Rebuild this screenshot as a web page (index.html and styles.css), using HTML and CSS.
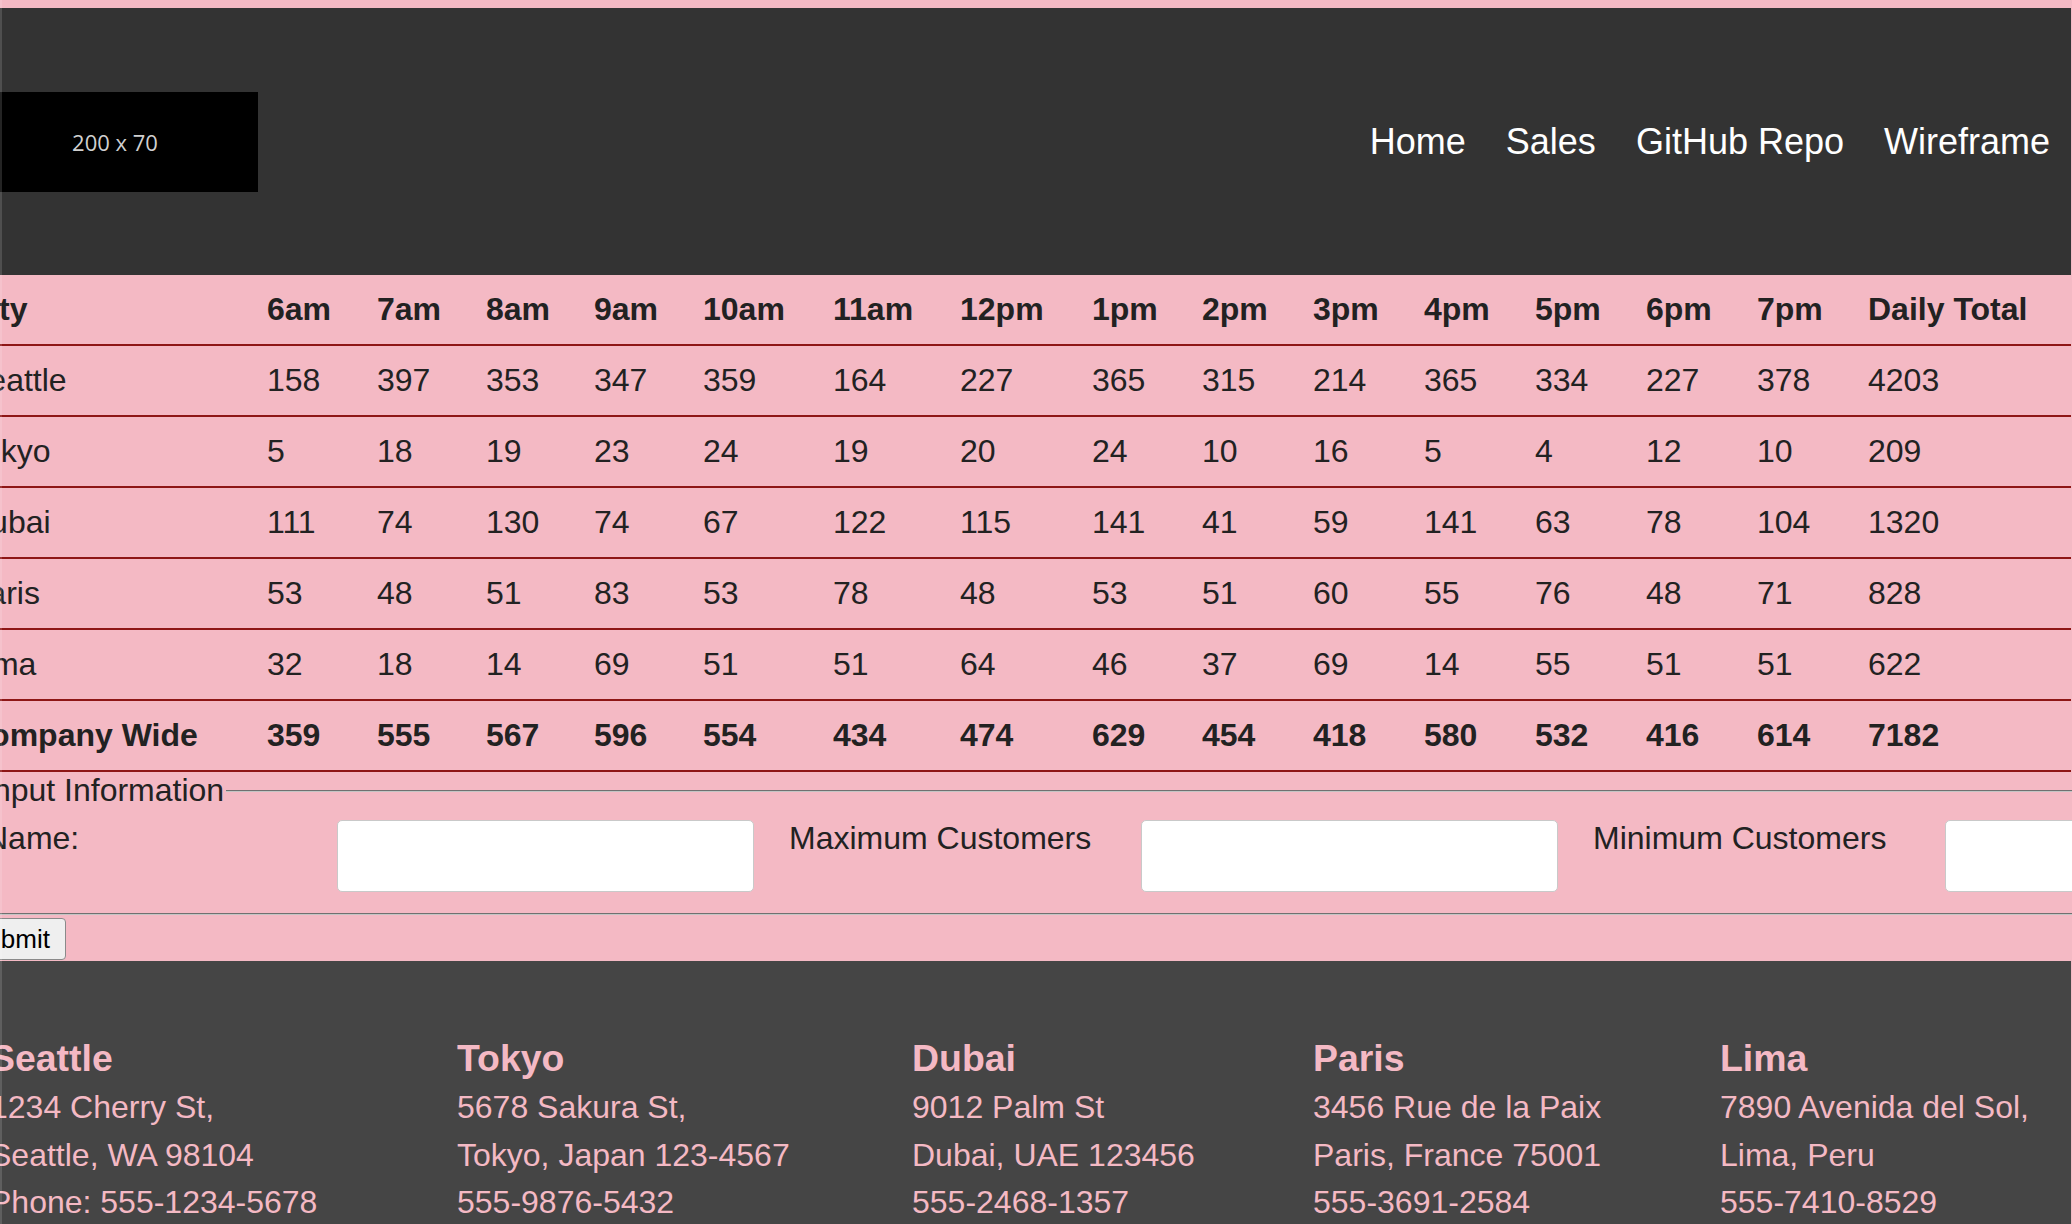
FILE: index.html
```html
<!DOCTYPE html>
<html lang="en">
<head>
<meta charset="utf-8">
<title>Salmon Cookies - Sales</title>
<link rel="stylesheet" href="styles.css">
</head>
<body>
<div class="edge"></div>
<div class="page">
  <header class="site-header">
    <div class="logo">200 x 70</div>
    <nav class="nav">
      <a class="nav-link" href="#">Home</a>
      <a class="nav-link" href="#">Sales</a>
      <a class="nav-link" href="#">GitHub Repo</a>
      <a class="nav-link" href="#">Wireframe</a>
    </nav>
  </header>
  <main>
    <table class="sales">
      <colgroup>
        <col><col><col><col><col><col><col><col><col><col><col><col><col><col><col><col>
      </colgroup>
      <thead>
        <tr><th>City</th><th>6am</th><th>7am</th><th>8am</th><th>9am</th><th>10am</th><th>11am</th><th>12pm</th><th>1pm</th><th>2pm</th><th>3pm</th><th>4pm</th><th>5pm</th><th>6pm</th><th>7pm</th><th>Daily Total</th></tr>
      </thead>
      <tbody>
        <tr><td>Seattle</td><td>158</td><td>397</td><td>353</td><td>347</td><td>359</td><td>164</td><td>227</td><td>365</td><td>315</td><td>214</td><td>365</td><td>334</td><td>227</td><td>378</td><td>4203</td></tr>
        <tr><td>Tokyo</td><td>5</td><td>18</td><td>19</td><td>23</td><td>24</td><td>19</td><td>20</td><td>24</td><td>10</td><td>16</td><td>5</td><td>4</td><td>12</td><td>10</td><td>209</td></tr>
        <tr><td>Dubai</td><td>111</td><td>74</td><td>130</td><td>74</td><td>67</td><td>122</td><td>115</td><td>141</td><td>41</td><td>59</td><td>141</td><td>63</td><td>78</td><td>104</td><td>1320</td></tr>
        <tr><td>Paris</td><td>53</td><td>48</td><td>51</td><td>83</td><td>53</td><td>78</td><td>48</td><td>53</td><td>51</td><td>60</td><td>55</td><td>76</td><td>48</td><td>71</td><td>828</td></tr>
        <tr><td>Lima</td><td>32</td><td>18</td><td>14</td><td>69</td><td>51</td><td>51</td><td>64</td><td>46</td><td>37</td><td>69</td><td>14</td><td>55</td><td>51</td><td>51</td><td>622</td></tr>
      </tbody>
      <tfoot>
        <tr><th>Company Wide</th><th>359</th><th>555</th><th>567</th><th>596</th><th>554</th><th>434</th><th>474</th><th>629</th><th>454</th><th>418</th><th>580</th><th>532</th><th>416</th><th>614</th><th>7182</th></tr>
      </tfoot>
    </table>

    <form class="store-form">
      <fieldset class="fieldset">
        <legend class="legend">Input Information</legend>
        <div class="fields">
          <label class="field-label" for="name">Name:</label>
          <input class="field-input" id="name" type="text">
          <label class="field-label" for="max">Maximum Customers</label>
          <input class="field-input" id="max" type="text">
          <label class="field-label" for="min">Minimum Customers</label>
          <input class="field-input" id="min" type="text">
          <label class="field-label" for="avg">Average Cookies</label>
          <input class="field-input" id="avg" type="text">
        </div>
      </fieldset>
      <button class="submit" type="submit">Submit</button>
    </form>
  </main>
  <footer class="site-footer">
    <div class="loc loc-seattle">
      <h3 class="loc-title">Seattle</h3>
      <p class="loc-line">1234 Cherry St,</p>
      <p class="loc-line">Seattle, WA 98104</p>
      <p class="loc-line">Phone: 555-1234-5678</p>
    </div>
    <div class="loc loc-tokyo">
      <h3 class="loc-title">Tokyo</h3>
      <p class="loc-line">5678 Sakura St,</p>
      <p class="loc-line">Tokyo, Japan 123-4567</p>
      <p class="loc-line">555-9876-5432</p>
    </div>
    <div class="loc loc-dubai">
      <h3 class="loc-title">Dubai</h3>
      <p class="loc-line">9012 Palm St</p>
      <p class="loc-line">Dubai, UAE 123456</p>
      <p class="loc-line">555-2468-1357</p>
    </div>
    <div class="loc loc-paris">
      <h3 class="loc-title">Paris</h3>
      <p class="loc-line">3456 Rue de la Paix</p>
      <p class="loc-line">Paris, France 75001</p>
      <p class="loc-line">555-3691-2584</p>
    </div>
    <div class="loc loc-lima">
      <h3 class="loc-title">Lima</h3>
      <p class="loc-line">7890 Avenida del Sol,</p>
      <p class="loc-line">Lima, Peru</p>
      <p class="loc-line">555-7410-8529</p>
    </div>
  </footer>
</div>
</body>
</html>
```

FILE: styles.css
```css
html {
  overflow: hidden;
}

body {
  margin: 8px 0 0;
  background: #f4b9c4;
  color: #222;
  font-family: "Liberation Sans", Arial, sans-serif;
}

.edge {
  position: fixed;
  left: 0;
  top: 0;
  bottom: 0;
  width: 2px;
  background: rgba(255, 255, 255, 0.14);
  z-index: 5;
}

.page {
  width: 2115px;
  margin-left: -44px;
}

/* Header */
.site-header {
  height: 267px;
  background: #333333;
  display: flex;
  align-items: center;
  justify-content: space-between;
  padding: 0 21px 0 16px;
  box-sizing: border-box;
}

.logo {
  width: 286px;
  height: 100px;
  background: #000;
  color: #d0d0d0;
  font-family: "Open Sans", "DejaVu Sans", sans-serif;
  font-size: 22px;
  display: flex;
  align-items: center;
  justify-content: center;
}

.nav {
  display: flex;
  gap: 40px;
}

.nav-link {
  color: #fff;
  text-decoration: none;
  font-size: 36px;
}

/* Table */
.sales {
  width: 2115px;
  table-layout: fixed;
  border-collapse: collapse;
  font-size: 32px;
}

.sales col:nth-child(1) { width: 300px; }
.sales col:nth-child(2) { width: 110px; }
.sales col:nth-child(3) { width: 109px; }
.sales col:nth-child(4) { width: 108px; }
.sales col:nth-child(5) { width: 109px; }
.sales col:nth-child(6) { width: 130px; }
.sales col:nth-child(7) { width: 127px; }
.sales col:nth-child(8) { width: 132px; }
.sales col:nth-child(9) { width: 110px; }
.sales col:nth-child(10) { width: 111px; }
.sales col:nth-child(11) { width: 111px; }
.sales col:nth-child(12) { width: 111px; }
.sales col:nth-child(13) { width: 111px; }
.sales col:nth-child(14) { width: 111px; }
.sales col:nth-child(15) { width: 111px; }
.sales col:nth-child(16) { width: 214px; }

.sales th,
.sales td {
  padding: 16px 0 16px 11px;
  text-align: left;
  white-space: nowrap;
  border-bottom: 2px solid #8e1616;
  line-height: normal;
}

.sales th {
  font-weight: bold;
}

.sales td {
  font-weight: normal;
}

/* Form */
.store-form {
  margin: 0;
}

.fieldset {
  margin: 0 2px;
  padding: 11px 24px 21px 27px;
  border: 2px groove #c4c4c4;
  border-left: none;
  font-size: 32px;
}

.legend {
  padding: 0 2px;
  margin-left: -3px;
  color: #222;
}

.fields {
  display: flex;
  align-items: flex-start;
}

.field-label {
  flex: 0 0 auto;
  width: 352px;
  white-space: nowrap;
  line-height: normal;
}

.field-input {
  flex: 0 0 auto;
  width: 417px;
  height: 72px;
  box-sizing: border-box;
  margin: 0 35px 0 0;
  border: 1.5px solid #c9c9c9;
  border-radius: 5px;
  background: #fff;
  font-size: 24px;
}

.submit {
  display: block;
  margin: 3px 0 1px -3px;
  height: 42px;
  padding: 0 15px;
  font-family: "Liberation Sans", Arial, sans-serif;
  font-size: 26px;
  color: #000;
  background: #efefef;
  border: 1px solid #8a8a8a;
  border-radius: 4px;
}

/* Footer */
.site-footer {
  background: #454545;
  color: #f4b9c4;
  display: flex;
  padding: 76px 0 40px 34px;
}

.loc-seattle { width: 467px; }
.loc-tokyo { width: 455px; }
.loc-dubai { width: 401px; }
.loc-paris { width: 407px; }
.loc-lima { flex: 1; }

.loc-title {
  margin: 0 0 4px;
  font-size: 37.44px;
  font-weight: bold;
  line-height: normal;
}

.loc-line {
  margin: 0;
  font-size: 32px;
  line-height: 47.5px;
  white-space: nowrap;
}
```
